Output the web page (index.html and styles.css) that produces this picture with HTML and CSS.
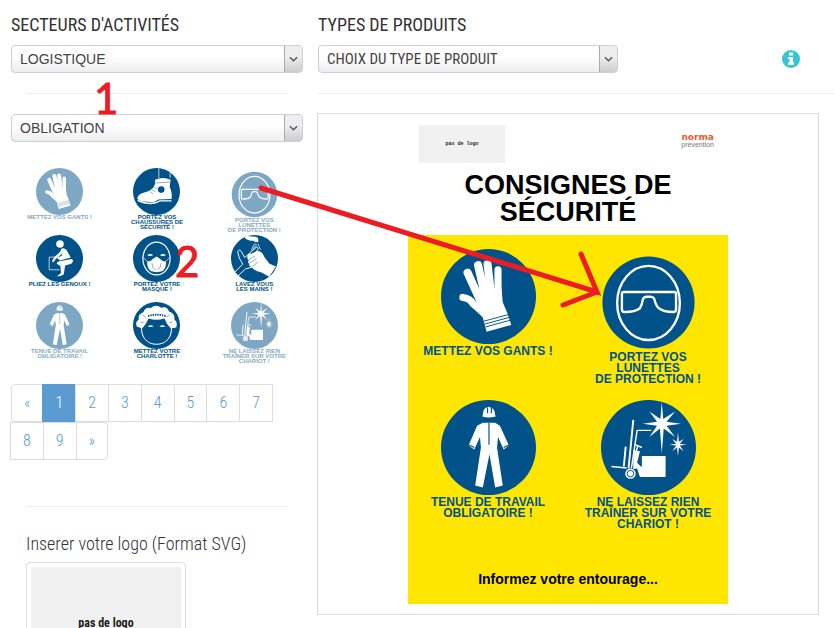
FILE: index.html
```html
<!DOCTYPE html>
<html lang="fr">
<head>
    <meta charset="UTF-8">
    <meta name="viewport" content="width=device-width, initial-scale=1.0">
    <title>Norma Prévention - Consignes de sécurité</title>
    <link rel="stylesheet" href="styles.css">
</head>
<body>
    <!-- Pictogrammes -->
    <svg class="sprite" aria-hidden="true">
        <symbol id="gants" viewBox="0 0 100 100">
            <circle class="disc" cx="50" cy="50" r="50"/>
            <g fill="none" stroke="#fff" stroke-linecap="round">
                <path stroke-width="8.500" d="M28 25L42 56M39 17L47 52M49 16L53 50"/>
                <path stroke-width="7.500" d="M60 22L60 50M23 51Q31 52 34 58L45 67"/>
            </g>
            <path fill="#fff" d="M36 46L41 42L63.500 40L65 56L70 68L74 80L48 87L44 72L33 61L38 57Z"/>
            <path class="line" d="M45 76L71 69M46 79L72 72M47 82L73 75"/>
        </symbol>
        <symbol id="chaussures" viewBox="0 0 100 100">
            <circle class="disc" cx="50" cy="50" r="50"/>
            <path fill="none" stroke="#fff" stroke-width="1.500" d="M55 1V22M79 9V21"/>
            <path fill="#fff" d="M47 25Q64 18 80 25L78 40Q84 53 82 66L54 67Q46 75 30 72Q12 71 9 65Q10 55 24 52Q35 50 42 43Q48 37 47 25Z"/>
            <path fill="none" stroke="#fff" stroke-width="3" d="M10 69Q32 79 48 74L57 70H82"/>
            <circle class="disc" cx="60" cy="46" r="7"/>
            <path class="line" d="M47 32L78 30M36 50L43 55M41 46L48 51M45 41L51 45"/>
        </symbol>
        <symbol id="lunettes" viewBox="0 0 100 100">
            <circle class="disc" cx="50" cy="50" r="48.500"/>
            <g fill="none" stroke="#fff" stroke-width="2.500">
                <ellipse cx="50" cy="50.500" rx="33" ry="39"/>
                <path d="M24 39H77Q79 39 79 41V57Q79 60 76 60Q66 60 61 56Q58 54 56 46Q55 44 52 44H48Q45 44 44 47Q43 53 41 56Q36 60 25 60Q22 60 22 57V41Q22 39 24 39Z"/>
            </g>
        </symbol>
        <symbol id="genoux" viewBox="0 0 100 100">
            <circle class="disc" cx="50" cy="50" r="50"/>
            <circle cx="51" cy="19" r="8" fill="#fff"/>
            <path fill="none" stroke="#fff" stroke-width="1.500" d="M48 47H28V74H50"/>
            <path fill="#fff" d="M54 29Q60 26 65 32L74 48L51 54L45 49L56 43L55 40L42 51L37 58L34 56L39 47L51 36Z"/>
            <path fill="#fff" d="M50 56L76 51Q82 55 75 61L62 65L59 84L51 88H45L53 81L52 66L44 61Q44 57 50 56Z"/>
        </symbol>
        <symbol id="masque" viewBox="0 0 100 100">
            <circle class="disc" cx="50" cy="50" r="50"/>
            <ellipse cx="50" cy="50" rx="29" ry="35" fill="none" stroke="#fff" stroke-width="2.500"/>
            <path fill="#fff" d="M30 43Q36 38 43 43Q36 46 30 43ZM57 43Q64 38 70 43Q64 46 57 43ZM50 46Q57 50 62 55L70 57Q71 71 62 77L50 79L39 77Q30 72 30 57L38 55Q43 50 50 46Z"/>
            <path fill="none" stroke="#fff" stroke-width="1.500" d="M21 47L32 58M79 47L68 58"/>
            <path class="line" d="M40 60Q41 70 48 75M60 60Q59 70 52 75"/>
        </symbol>
        <symbol id="mains" viewBox="0 0 100 100">
            <circle class="disc" cx="50" cy="50" r="50"/>
            <path fill="#fff" d="M29 5L34 2Q44 3 55 4Q59 6 58 15H50V12H42Q30 10 29 5Z"/>
            <path fill="none" stroke="#fff" stroke-width="1.500" d="M50 18L43 33M53 18V32M57 18L63 32M50 24L46 35"/>
            <path class="glove" d="M8 79L25 62Q16 50 14 35Q18 29 22 35L29 48L38 40L54 26Q60 26 57 31L47 44L58 49L50 67L31 72L15 87Z"/>
            <path fill="#fff" d="M35 45Q36 38 43 40L55 34Q66 33 71 47L82 61L96 67L81 89L65 80Q49 77 44 68Q37 67 39 62Q34 57 38 54Q33 50 35 45Z"/>
            <path class="line" d="M38 52L51 45M40 60L54 50M45 67L58 57"/>
        </symbol>
        <symbol id="tenue" viewBox="0 0 100 100">
            <circle class="disc" cx="50" cy="50" r="50"/>
            <path fill="#fff" d="M44 16Q44 8 50 7Q57 8 57 16L58 17Q50 20 43 17ZM44 24H57L62 27L71.500 48L66 52L60 39L59 50L65 90L57 92L51 57L44 92L36 90L42 50L41 39L35 52L29 48L38 27Z"/>
            <path class="line" d="M50.500 24V47M49 8V14M53 8V14M29 47L35 50M72 47L66 50" stroke-width="1.200"/>
        </symbol>
        <symbol id="charlotte" viewBox="0 0 100 100">
            <circle class="disc" cx="50" cy="50" r="50"/>
            <circle cx="50" cy="58" r="33" fill="#fff"/>
            <path fill="#fff" d="M8 52Q4 43 12 38Q10 26 22 22Q26 10 38 13Q49 3 60 12Q72 8 77 20Q90 24 88 37Q96 43 92 54L82 56L70 37H30L18 56Z"/>
            <path class="disc" d="M19 57Q29 46 33 35Q50 40 67 35Q71 47 81 57Q79 88 50 89Q21 88 19 57Z"/>
            <path class="line" stroke-width="4" stroke-dasharray="3 2" d="M32 30Q50 24 70 30"/>
            <path class="line" d="M20 27L28 33M16 43L23 44M78 27L71 33M84 42L77 44"/>
            <path fill="#fff" d="M31 52Q38 47 44 52Q37 54 31 52ZM56 52Q63 47 69 52Q63 54 56 52Z"/>
        </symbol>
        <symbol id="chariot" viewBox="0 0 100 100">
            <circle class="disc" cx="50" cy="50" r="50"/>
            <path fill="#fff" d="M64 2L65.500 20L78 12L69 23L84 25L69 27L78 39L66 30L64 56L62 30L51 39L59 27L44 25L59 23L51 12L62.500 20Z"/>
            <path fill="#fff" d="M81 34L82 44L87 41L83 46L90 47L83 48L87 54L82 50L81 59L80 50L75 54L79 48L72 47L79 46L75 41L80 44Z"/>
            <path fill="#fff" d="M43 59H68V81H41L38 72L43 70ZM34 53L41 54L38 66L43 71L34 73Z"/>
            <g fill="none" stroke="#fff">
                <path stroke-width="2" d="M34 21L29 72M26 49L24 70"/>
                <path stroke-width="1.500" d="M38 32L32 72M38 32H53M11 70L27 71.500M36 47L43 50M39 48L37 54"/>
            </g>
            <circle cx="31" cy="77.500" r="5.500" fill="#fff"/>
            <circle class="line" cx="31" cy="77.500" r="3.500"/>
        </symbol>
    </svg>

    <div class="page">
        <aside class="sidebar">
            <label class="title" for="secteur">SECTEURS D'ACTIVITÉS</label>
            <div class="select-box">
                <select id="secteur"><option>LOGISTIQUE</option></select>
                <span class="arrow"><svg viewBox="0 0 10 6"><path d="M1 1L5 5L9 1"/></svg></span>
            </div>
            <hr>
            <div class="select-box">
                <select id="famille" aria-label="Famille"><option>OBLIGATION</option></select>
                <span class="arrow"><svg viewBox="0 0 10 6"><path d="M1 1L5 5L9 1"/></svg></span>
            </div>

            <div class="thumbs">
                <button class="picto used"><svg><use href="#gants"/></svg>METTEZ VOS GANTS !</button>
                <button class="picto"><svg><use href="#chaussures"/></svg>PORTEZ VOS<br>CHAUSSURES DE<br>SÉCURITÉ !</button>
                <button class="picto used low"><svg><use href="#lunettes"/></svg>PORTEZ VOS<br>LUNETTES<br>DE PROTECTION !</button>
                <button class="picto"><svg><use href="#genoux"/></svg>PLIEZ LES GENOUX !</button>
                <button class="picto"><svg><use href="#masque"/></svg>PORTEZ VOTRE<br>MASQUE !</button>
                <button class="picto"><svg><use href="#mains"/></svg>LAVEZ VOUS<br>LES MAINS !</button>
                <button class="picto used"><svg><use href="#tenue"/></svg>TENUE DE TRAVAIL<br>OBLIGATOIRE !</button>
                <button class="picto"><svg><use href="#charlotte"/></svg>METTEZ VOTRE<br>CHARLOTTE !</button>
                <button class="picto used"><svg><use href="#chariot"/></svg>NE LAISSEZ RIEN<br>TRAÎNER SUR VOTRE<br>CHARIOT !</button>
            </div>

            <ul class="pagination">
                <li><a href="#">«</a></li>
                <li class="active"><a href="#">1</a></li>
                <li><a href="#">2</a></li>
                <li><a href="#">3</a></li>
                <li><a href="#">4</a></li>
                <li><a href="#">5</a></li>
                <li><a href="#">6</a></li>
                <li><a href="#">7</a></li>
                <li><a href="#">8</a></li>
                <li><a href="#">9</a></li>
                <li><a href="#">»</a></li>
            </ul>
            <hr>
            <div class="upload">
                <h4>Inserer votre logo (Format SVG)</h4>
                <div class="thumbnail"><div class="no-logo">pas de logo</div></div>
            </div>
        </aside>

        <main class="content">
            <label class="title" for="produit">TYPES DE PRODUITS</label>
            <div class="toolbar">
                <div class="select-box product">
                    <select id="produit"><option>CHOIX DU TYPE DE PRODUIT</option></select>
                    <span class="arrow"><svg viewBox="0 0 10 6"><path d="M1 1L5 5L9 1"/></svg></span>
                </div>
                <a class="info" href="#" aria-label="Informations">
                    <svg viewBox="0 0 18 18">
                        <circle cx="9" cy="9" r="9"/>
                        <path d="M7 2.500H11V5.500H7ZM6 7H11V12.500H12V15H6V12.500H7.500V9H6Z"/>
                    </svg>
                </a>
            </div>
            <hr>

            <div class="stage">
                <div class="poster">
                    <div class="poster-head">
                        <div class="no-logo small">pas de logo</div>
                        <div class="norma"><b>norma</b><span>prévention</span></div>
                    </div>
                    <h1>CONSIGNES DE<br>SÉCURITÉ</h1>
                    <div class="board">
                        <div class="board-grid">
                            <div class="picto"><svg><use href="#gants"/></svg>METTEZ VOS GANTS !</div>
                            <div class="picto low"><svg><use href="#lunettes"/></svg>PORTEZ VOS<br>LUNETTES<br>DE PROTECTION !</div>
                            <div class="picto"><svg><use href="#tenue"/></svg>TENUE DE TRAVAIL<br>OBLIGATOIRE !</div>
                            <div class="picto"><svg><use href="#chariot"/></svg>NE LAISSEZ RIEN<br>TRAÎNER SUR VOTRE<br>CHARIOT !</div>
                        </div>
                        <p>Informez votre entourage...</p>
                    </div>
                </div>
            </div>
        </main>

        <!-- Annotations du tutoriel -->
        <span class="step step-1">1</span>
        <span class="step step-2">2</span>
        <svg class="guide" viewBox="0 0 350 130"><path d="M11 13L347 117L331 79M347 117L313 130"/></svg>
    </div>
</body>
</html>
```
FILE: styles.css
```css
* {
    box-sizing: border-box;
}
body {
    margin: 0;
    background-color: #fff;
    color: #333;
    font-family: 'Roboto Condensed', 'Liberation Sans Narrow', sans-serif;
    font-size: 16px;
}
.sprite {
    position: absolute;
    width: 0;
    height: 0;
}
.disc {
    fill: #005288;
}
.line {
    fill: none;
    stroke: #005288;
}
.glove {
    fill: #005288;
    stroke: #fff;
    stroke-width: 2;
}
.page {
    position: relative;
    display: grid;
    grid-template-columns: minmax(0, 73fr) minmax(0, 129fr);
    column-gap: 15px;
    padding: 14px 0 0 11px;
}
.title {
    display: block;
    height: 31px;
    font-size: 18px;
    line-height: 22px;
}
hr {
    height: 1px;
    margin: 20px 0 19px;
    border: 0;
    background-color: #eee;
}
.sidebar hr {
    margin: 20px 15px;
}

/* Listes */
.select-box {
    position: relative;
    height: 28px;
}
.product {
    width: 300px;
}
select {
    width: 100%;
    height: 100%;
    padding: 0 36px 0 8px;
    appearance: none;
    border: 1px solid #cbd0d8;
    border-radius: 4px;
    background: linear-gradient(#fff 40%, #eee);
    color: #444;
    font-family: 'Liberation Sans', sans-serif;
    font-size: 14px;
}
.product select {
    font-family: inherit;
    font-size: 15px;
}
.arrow {
    position: absolute;
    top: 1px;
    right: 1px;
    bottom: 1px;
    width: 18px;
    display: flex;
    align-items: center;
    justify-content: center;
    border-left: 1px solid #aaa;
    border-radius: 0 3px 3px 0;
    background: linear-gradient(#eee 40%, #ccc);
    pointer-events: none;
}
.arrow svg {
    width: 9px;
    height: 6px;
    fill: none;
    stroke: #555;
    stroke-width: 1.5;
}

/* Pictogrammes */
.picto {
    display: flex;
    flex-direction: column;
    align-items: center;
    padding: 0;
    border: 0;
    background: none;
    color: #005288;
    font-family: 'Liberation Sans', sans-serif;
    font-weight: bold;
    text-align: center;
    white-space: nowrap;
}
.thumbs {
    display: grid;
    grid-template-columns: repeat(3, minmax(0, 1fr));
    grid-auto-rows: 67px;
    padding: 26px 0 15px;
}
.thumbs .picto {
    justify-content: flex-start;
    font-size: 6px;
    line-height: 5px;
    cursor: pointer;
}
.thumbs svg {
    width: 47px;
    height: 47px;
    flex-shrink: 0;
}
.thumbs .used {
    opacity: 0.5;
}
.thumbs .low {
    padding-top: 3px;
}

/* Pagination */
.pagination {
    display: flex;
    flex-wrap: wrap;
    margin: 0 0 46px;
    padding: 0;
    list-style: none;
}
.pagination a {
    display: block;
    height: 38px;
    margin-left: -1px;
    padding: 0 12px;
    border: 1px solid #ddd;
    color: #5b9bd1;
    font-weight: 300;
    line-height: 36px;
    text-decoration: none;
}
.pagination li:first-child a {
    margin-left: 0;
    border-radius: 4px 0 0 4px;
}
.pagination li:last-child a {
    border-radius: 0 4px 4px 0;
}
.pagination .active a {
    border-color: #5b9bd1;
    background-color: #5b9bd1;
    color: #fff;
}

/* Logo du client */
.upload {
    margin: 0 15px;
}
.upload h4 {
    margin: 26px 0 7px;
    font-size: 18px;
    font-weight: 300;
    line-height: 22px;
}
.thumbnail {
    width: 160px;
    padding: 4px;
    border: 1px solid #ddd;
    border-radius: 4px;
}
.no-logo {
    display: flex;
    align-items: center;
    justify-content: center;
    height: 112px;
    background-color: #f1f1f1;
    color: #222;
    font-size: 12px;
    font-weight: bold;
}
.no-logo.small {
    width: 86px;
    height: 38px;
    font-family: 'Liberation Mono', monospace;
    font-size: 5px;
}

/* Zone de droite */
.toolbar {
    display: flex;
    align-items: center;
    justify-content: space-between;
    padding-right: 34px;
}
.info svg {
    display: block;
    width: 18px;
    height: 18px;
    fill: #36c6d3;
}
.info path {
    fill: #fff;
}
.stage {
    margin: 0 15px 0 -1px;
    padding: 11px 0 10px;
    border: 1px solid #ddd;
}
.poster {
    width: 320px;
    margin: 0 auto;
    font-family: 'Liberation Sans', sans-serif;
    font-weight: bold;
    text-align: center;
}
.poster-head {
    display: flex;
    justify-content: space-between;
    padding: 0 14px 0 11px;
}
.norma {
    display: flex;
    flex-direction: column;
    padding-top: 9px;
    color: #777;
    font-size: 7px;
    font-weight: normal;
    line-height: 7px;
}
.norma b {
    color: #f0592b;
    font-family: 'DejaVu Sans', sans-serif;
    font-size: 9px;
}
.poster h1 {
    margin: 9px 0;
    color: #000;
    font-size: 27px;
    line-height: 27px;
}
.board {
    padding: 14px 0 16px;
    background-color: #ffe600;
}
.board-grid {
    display: grid;
    grid-template-columns: 1fr 1fr;
    grid-auto-rows: 151px;
}
.board .picto {
    font-size: 12px;
    line-height: 11px;
}
.board svg {
    width: 95px;
    height: 95px;
    margin-bottom: 2px;
}
.board .low {
    padding-top: 6px;
}
.board p {
    margin: 20px 0 0;
    color: #000;
    font-size: 14px;
    line-height: 17px;
}

/* Annotations */
.step {
    position: absolute;
    color: #ed1c24;
    font-family: Lato, sans-serif;
    font-size: 42px;
    line-height: 42px;
    -webkit-text-stroke: 1px #ed1c24;
}
.step-1 {
    top: 77px;
    left: 94px;
}
.step-2 {
    top: 240px;
    left: 175px;
}
.guide {
    position: absolute;
    top: 175px;
    left: 250px;
    width: 350px;
    height: 130px;
    overflow: visible;
    fill: none;
    stroke: #ed1c24;
    stroke-width: 5;
    stroke-linecap: round;
    pointer-events: none;
}
```
